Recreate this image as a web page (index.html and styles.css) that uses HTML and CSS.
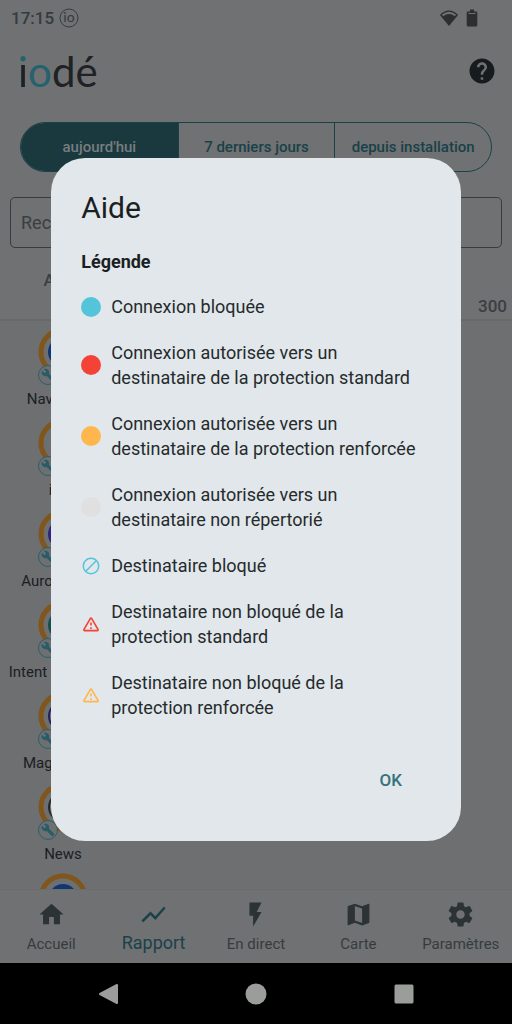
FILE: index.html
```html
<!DOCTYPE html>
<html lang="fr">
<head>
<meta charset="utf-8">
<meta name="viewport" content="width=device-width, initial-scale=1">
<title>iodé – Rapport</title>
<link rel="stylesheet" href="styles.css">
</head>
<body>
<svg class="sprite" aria-hidden="true">
  <symbol id="wrench" viewBox="0 0 24 24"><path d="M22.7 19l-9.1-9.1c.9-2.3.4-5-1.500-6.900-2-2-5-2.400-7.400-1.300L9 6 6 9 1.600 4.700C.4 7.100.9 10.100 2.900 12.100c1.900 1.900 4.600 2.400 6.900 1.500l9.100 9.100c.4.4 1 .4 1.400 0l2.300-2.300c.5-.4.5-1.100.1-1.400z"/></symbol>
  <symbol id="warning" viewBox="0 0 24 24"><path d="M12 5.990L19.530 19H4.470L12 5.990M2.740 18c-.770 1.330.190 3 1.730 3h15.060c1.540 0 2.500-1.670 1.730-3L13.730 4.990c-.770-1.330-2.690-1.330-3.460 0L2.740 18zM11 11v2c0 .550.450 1 1 1s1-.450 1-1v-2c0-.550-.450-1-1-1s-1 .450-1 1zm0 5h2v2h-2z"/></symbol>
</svg>

<div class="status">
  <span>17:15</span>
  <svg class="status-io" viewBox="0 0 20 20"><circle cx="10" cy="10" r="9"/><text x="10" y="14" text-anchor="middle">io</text></svg>
  <svg class="status-wifi" viewBox="0 0 20 18"><path d="M10 17L1 6C6 0 14 0 19 6Z"/><path class="wifi-gap" d="M3.500 6.500C7.500 3.300 12.500 3.300 16.500 6.500"/></svg>
  <svg class="status-battery" viewBox="0 0 12 18"><path d="M4 .5h4v2H10a1.300 1.300 0 0 1 1.300 1.300v12.400a1.300 1.300 0 0 1-1.300 1.300H2a1.300 1.300 0 0 1-1.300-1.300V3.800A1.300 1.300 0 0 1 2 2.500h2z"/><path class="battery-gap" d="M2.500 4.500h7"/></svg>
</div>

<header class="header">
  <h1 class="logo"><span class="logo-i">i</span><span class="logo-o">o</span>dé</h1>
  <button class="help" type="button" aria-label="Aide">
    <svg viewBox="0 0 24 24"><path d="M12 2C6.480 2 2 6.480 2 12s4.480 10 10 10 10-4.480 10-10S17.520 2 12 2zm1 17h-2v-2h2v2zm2.070-7.750l-.9.920C13.450 12.900 13 13.500 13 15h-2v-.5c0-1.100.450-2.100 1.170-2.830l1.240-1.260c.370-.360.590-.860.590-1.410 0-1.100-.9-2-2-2s-2 .9-2 2H8c0-2.210 1.790-4 4-4s4 1.790 4 4c0 .880-.360 1.680-.930 2.250z"/></svg>
  </button>
</header>

<div class="periods">
  <button type="button" class="period period-on">aujourd'hui</button>
  <button type="button" class="period">7 derniers jours</button>
  <button type="button" class="period">depuis installation</button>
</div>

<input class="search" type="text" aria-label="Rechercher" placeholder="Rechercher">

<div class="columns"><span class="col-app">Apps</span><span class="col-max">300</span></div>

<main class="apps">
  <div class="app"><svg class="ring" viewBox="0 0 50 50"><circle class="ring-line" cx="25" cy="25" r="22"/><circle class="disc-blue" cx="25" cy="25" r="15"/><use href="#badge"/></svg><span>Navigateur</span></div>
  <div class="app"><svg class="ring" viewBox="0 0 50 50"><circle class="ring-line" cx="25" cy="25" r="22"/><use href="#badge"/></svg><span>iodé</span></div>
  <div class="app"><svg class="ring" viewBox="0 0 50 50"><circle class="ring-line" cx="25" cy="25" r="22"/><circle class="disc-violet" cx="25" cy="25" r="15"/><use href="#badge"/></svg><span>Aurora Store</span></div>
  <div class="app"><svg class="ring" viewBox="0 0 50 50"><circle class="ring-line" cx="25" cy="25" r="22"/><circle class="disc-green" cx="25" cy="25" r="15"/><use href="#badge"/></svg><span>Intent Resolver…</span></div>
  <div class="app"><svg class="ring" viewBox="0 0 50 50"><circle class="ring-line" cx="25" cy="25" r="22"/><circle class="disc-navy" cx="25" cy="25" r="14"/><use href="#badge"/></svg><span>Magic Earth</span></div>
  <div class="app"><svg class="ring" viewBox="0 0 50 50"><circle class="ring-line" cx="25" cy="25" r="22"/><circle class="disc-dark" cx="25" cy="25" r="14"/><use href="#badge"/></svg><span>News</span></div>
  <div class="app"><svg class="ring" viewBox="0 0 50 50"><circle class="ring-line" cx="25" cy="25" r="22"/><circle class="disc-blue" cx="25" cy="25" r="14"/></svg></div>
</main>
<svg class="sprite" aria-hidden="true">
  <defs><g id="badge"><circle class="badge-ring" cx="10" cy="48" r="9.500"/><use class="badge-tool" href="#wrench" x="3" y="41" width="14" height="14"/></g></defs>
</svg>

<nav class="tabs">
  <a class="tab" href="#accueil"><svg viewBox="0 0 24 24"><path d="M10 20v-6h4v6h5v-8h3L12 3 2 12h3v8z"/></svg><span>Accueil</span></a>
  <a class="tab tab-on" href="#rapport"><svg viewBox="0 0 24 24"><path d="M3.500 18.490l6-6.010 4 4L22 6.920l-1.410-1.410-7.090 7.970-4-4L2 16.990z"/></svg><span>Rapport</span></a>
  <a class="tab" href="#direct"><svg viewBox="0 0 24 24"><path d="M7 2v11h3v9l7-12h-4l4-8z"/></svg><span>En direct</span></a>
  <a class="tab" href="#carte"><svg viewBox="0 0 24 24"><path d="M20.500 3l-.160.030L15 5.100 9 3 3.360 4.900c-.210.070-.360.250-.360.480V20.500c0 .280.220.5.5.5l.160-.030L9 18.900l6 2.100 5.640-1.900c.210-.070.360-.250.360-.480V3.500c0-.280-.220-.5-.5-.5zM15 19l-6-2.110V5l6 2.110V19z"/></svg><span>Carte</span></a>
  <a class="tab" href="#parametres"><svg viewBox="0 0 24 24"><path d="M19.430 12.980c.040-.320.070-.640.070-.980s-.030-.660-.070-.980l2.110-1.650c.190-.150.240-.420.120-.640l-2-3.460c-.120-.220-.390-.3-.610-.220l-2.490 1c-.520-.4-1.080-.730-1.690-.980l-.380-2.650C14.460 2.180 14.250 2 14 2h-4c-.250 0-.460.180-.490.420l-.380 2.650c-.610.250-1.170.590-1.690.980l-2.490-1c-.230-.090-.490 0-.610.220l-2 3.460c-.130.220-.070.490.120.640l2.110 1.650c-.040.320-.070.650-.070.980s.030.660.070.980l-2.110 1.650c-.190.150-.240.420-.120.640l2 3.460c.120.220.390.3.610.220l2.490-1c.520.4 1.080.730 1.690.980l.380 2.650c.030.240.240.420.490.420h4c.250 0 .460-.180.490-.420l.380-2.650c.610-.250 1.170-.590 1.690-.980l2.490 1c.230.090.490 0 .610-.220l2-3.460c.120-.220.070-.490-.120-.640l-2.110-1.650zM12 15.500c-1.930 0-3.500-1.570-3.500-3.500s1.570-3.500 3.500-3.500 3.500 1.570 3.500 3.500-1.570 3.500-3.500 3.500z"/></svg><span>Paramètres</span></a>
</nav>

<div class="system">
  <button type="button" aria-label="Retour"><svg viewBox="0 0 22 22"><path class="back" d="M20 2v18L3 11z"/></svg></button>
  <button type="button" aria-label="Écran d'accueil"><svg viewBox="0 0 22 22"><circle cx="11" cy="11" r="10.500"/></svg></button>
  <button type="button" aria-label="Applications récentes"><svg viewBox="0 0 22 22"><rect x="1.500" y="1.500" width="19" height="19" rx="1.500"/></svg></button>
</div>

<div class="overlay">
  <section class="dialog" role="dialog" aria-modal="true" aria-labelledby="aide-titre">
    <h2 class="dialog-title" id="aide-titre">Aide</h2>
    <h3 class="dialog-subtitle">Légende</h3>
    <ul class="legend">
      <li><span class="dot dot-blue"></span><span>Connexion bloquée</span></li>
      <li><span class="dot dot-red"></span><span>Connexion autorisée vers un destinataire de la protection standard</span></li>
      <li><span class="dot dot-orange"></span><span>Connexion autorisée vers un destinataire de la protection renforcée</span></li>
      <li><span class="dot dot-grey"></span><span>Connexion autorisée vers un destinataire non répertorié</span></li>
      <li><svg class="mark mark-block" viewBox="0 0 20 20"><circle cx="10" cy="10" r="7.700"/><path d="M4.800 15.200L15.200 4.800"/></svg><span>Destinataire bloqué</span></li>
      <li><svg class="mark mark-red"><use href="#warning"/></svg><span>Destinataire non bloqué de la protection standard</span></li>
      <li><svg class="mark mark-orange"><use href="#warning"/></svg><span>Destinataire non bloqué de la protection renforcée</span></li>
    </ul>
    <button class="ok" type="button">OK</button>
  </section>
</div>
</body>
</html>
```

FILE: styles.css
```css
* { box-sizing: border-box; }

:root {
  --bg: #6f7173;
  --ink: #1a2022;
  --muted: #353b3d;
  --teal: #1a4148;
  --cyan: #24626e;
}

body {
  margin: 0;
  height: 100vh;
  display: flex;
  flex-direction: column;
  overflow: hidden;
  background: var(--bg);
  color: var(--ink);
  font-family: Roboto, "Liberation Sans", sans-serif;
  font-size: 15px;
}

button {
  border: 0;
  padding: 0;
  background: none;
  color: inherit;
  font: inherit;
}

svg { display: block; flex: none; }
.sprite { position: absolute; width: 0; height: 0; }

.status {
  display: flex;
  align-items: center;
  height: 35px;
  flex: none;
  padding: 0 34px 0 11px;
  color: var(--muted);
  fill: #2b2f30;
  font-size: 17px;
  font-weight: 500;
}
.status-io { width: 20px; height: 20px; margin-left: 5px; }
.status-io circle { fill: none; stroke: var(--muted); stroke-width: 1; }
.status-io text { fill: var(--muted); font: 400 14px Lato, sans-serif; }
.status-wifi { width: 20px; height: 18px; margin-left: auto; }
.status-battery { width: 12px; height: 18px; margin-left: 7px; }
.wifi-gap, .battery-gap { fill: none; stroke: var(--bg); stroke-width: 1; }
.wifi-gap { stroke-width: 2; }

.header {
  display: flex;
  align-items: center;
  justify-content: space-between;
  height: 72px;
  flex: none;
  padding: 0 15px 0 18px;
}
.logo {
  margin: 0;
  font: 400 42px/70px Lato, sans-serif;
  color: #1f2224;
}
.logo-i {
  background: linear-gradient(var(--cyan) 38%, #1f2224 38%);
  -webkit-background-clip: text;
  background-clip: text;
  color: transparent;
}
.logo-o { color: var(--cyan); }
.help svg { width: 30px; height: 30px; fill: #161b1d; }

.periods {
  display: grid;
  grid-template-columns: repeat(3, 1fr);
  height: 50px;
  flex: none;
  margin: 15px 20px 0;
  border: 1px solid var(--teal);
  border-radius: 25px;
  overflow: hidden;
}
.period {
  color: var(--teal);
  font-size: 15px;
  font-weight: 500;
}
.period + .period { border-left: 1px solid var(--teal); }
.period-on { background: #19393f; color: #777d80; }

.search {
  height: 51px;
  flex: none;
  margin: 25px 10px 0;
  padding: 0 10px;
  border: 1px solid #353d3f;
  border-radius: 5px;
  background: none;
  font: 400 18px Roboto, sans-serif;
}
.search::placeholder { color: #393f41; opacity: 1; }

.columns {
  display: flex;
  justify-content: space-between;
  align-items: flex-start;
  height: 73px;
  flex: none;
  padding: 19px 5px 0 0;
  border-bottom: 2px solid #656b6d;
  color: #3a3f41;
  font-size: 17px;
  font-weight: 500;
  line-height: 26px;
}
.col-app { width: 126px; text-align: center; }
.col-max { align-self: flex-end; }

.apps { flex: 1; min-height: 0; overflow: hidden; background: #6d6f71; }
.app {
  display: flex;
  flex-direction: column;
  align-items: center;
  gap: 12px;
  width: 126px;
  height: 91px;
  padding-top: 6px;
  line-height: 20px;
  white-space: nowrap;
}
.ring { width: 50px; height: 50px; overflow: visible; }
.ring-line { fill: none; stroke: #80561d; stroke-width: 5; }
.disc-blue { fill: #123674; }
.disc-violet { fill: #30247c; }
.disc-green { fill: #16504c; }
.disc-navy { fill: #777; stroke: #25205a; stroke-width: 2; }
.disc-dark { fill: #777; stroke: #252828; stroke-width: 2; }
.badge-ring { fill: #6d6f71; stroke: var(--cyan); stroke-width: 1; }
.badge-tool { fill: #285c66; }

.tabs {
  display: grid;
  grid-template-columns: repeat(5, 1fr);
  height: 74px;
  flex: none;
  padding-top: 10px;
  border-top: 1px solid #6a6c6e;
}
.tab {
  display: flex;
  flex-direction: column;
  align-items: center;
  gap: 5px;
  color: #363c3e;
  fill: #2c3335;
  font-size: 15px;
  line-height: 20px;
  text-decoration: none;
}
.tab svg { width: 29px; height: 29px; }
.tab-on { gap: 4px; color: var(--teal); fill: var(--teal); font-size: 18px; }

.system {
  display: flex;
  align-items: center;
  justify-content: space-between;
  height: 61px;
  flex: none;
  padding: 0 19%;
  background: #000;
}
.system svg { width: 22px; height: 22px; fill: #9b9d9b; }
.back { stroke: #9b9d9b; stroke-width: 2; stroke-linejoin: round; }

.overlay {
  position: fixed;
  inset: 0;
  display: grid;
  align-items: center;
  padding: 35px 10% 60px;
}
.dialog {
  display: flex;
  flex-direction: column;
  padding: 30px 30px 41px;
  border-radius: 34px;
  background: #e1e7ea;
}
.dialog-title {
  margin: 0 0 22px;
  font-size: 30px;
  font-weight: 400;
  line-height: 40px;
}
.dialog-subtitle {
  margin: 0 0 20px;
  font-size: 18px;
  font-weight: 700;
  line-height: 24px;
}
.legend {
  display: flex;
  flex-direction: column;
  gap: 21px;
  margin: 0;
  padding: 0 10px 0 0;
  list-style: none;
  color: #252b2d;
  font-size: 18px;
  line-height: 25px;
}
.legend li { display: flex; align-items: center; gap: 10px; }
.dot { width: 20px; height: 20px; flex: none; border-radius: 50%; }
.dot-blue { background: #53c4da; }
.dot-red { background: #f44336; }
.dot-orange { background: #ffb74d; }
.dot-grey { background: #e0e0e0; }
.mark { width: 20px; height: 20px; }
.mark-block { fill: none; stroke: #53c4da; stroke-width: 1.500; }
.mark-red { fill: #f44336; }
.mark-orange { fill: #ffb74d; }
.ok {
  align-self: flex-end;
  width: 80px;
  height: 40px;
  margin-top: 40px;
  color: #34727c;
  font-size: 17px;
  font-weight: 500;
}
```
